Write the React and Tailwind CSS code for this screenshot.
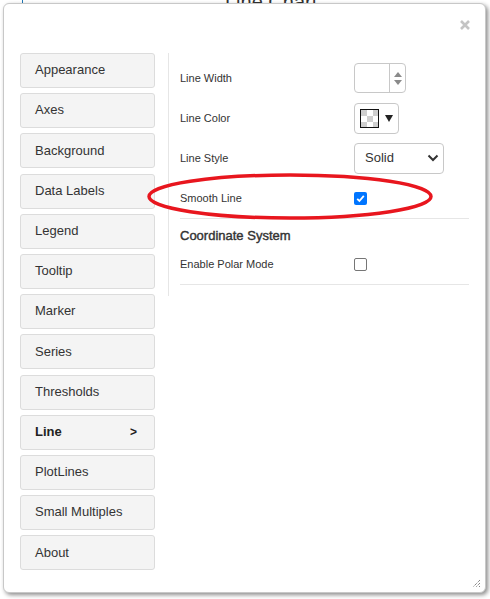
import React from "react";

const items = [
  "Appearance","Axes","Background","Data Labels","Legend","Tooltip","Marker","Series","Thresholds","Line","PlotLines","Small Multiples","About",
];

function Row({ label, children }) {
  return (
    <div className="flex h-[40px] items-center">
      <div className="w-[174px] text-[11px] text-[#333]">{label}</div>
      <div className="flex items-center">{children}</div>
    </div>
  );
}

function Checkbox({ checked }) {
  return checked ? (
    <div className="flex h-[13px] w-[13px] items-center justify-center rounded-[2px] bg-[#0075ff]">
      <svg width="11" height="11" viewBox="0 0 11 11">
        <path d="M2.2 5.8 L4.4 8 L8.8 2.8" fill="none" stroke="white" strokeWidth="1.8" />
      </svg>
    </div>
  ) : (
    <div className="h-[13px] w-[13px] rounded-[2px] border border-[#767676] bg-white" />
  );
}

export default function App() {
  return (
    <div
      className="relative h-[599px] w-[490px] overflow-hidden bg-white pl-[3px] pt-[3px]"
      style={{ fontFamily: '"Liberation Sans", Arial, sans-serif' }}
    >
      <div className="absolute left-[225px] top-[-13px] text-[20px] text-[#333]">Line Chart</div>
      <div className="absolute left-[22px] top-0 h-[4px] w-[1px] bg-[#1f77b4]" />
      <div className="relative flex h-[590px] w-[483px] flex-col rounded-[6px] border border-[#c8c8c8] bg-white shadow-[2px_2px_4px_rgba(0,0,0,0.45)]">
        <div className="flex h-[49px] justify-end pr-[14px] pt-[15px]">
          <svg width="12" height="12" viewBox="0 0 12 12">
            <path d="M2 2 L10 10 M10 2 L2 10" stroke="#c4c4c4" strokeWidth="2.6" />
          </svg>
        </div>
        <div className="flex items-start pl-[16px]">
          <div className="flex w-[135px] flex-col gap-[5.2px]">
            {items.map((it) => (
              <div
                key={it}
                className={
                  "flex h-[35px] items-center justify-between rounded-[3px] border border-[#dcdcdc] bg-[#f4f4f4] pb-[1px] pl-[14px] pr-[17px] text-[13px] " +
                  (it === "Line" ? "font-bold text-[#222]" : "text-[#333]")
                }
              >
                <span>{it}</span>
                {it === "Line" && <span className="text-[12px]">&gt;</span>}
              </div>
            ))}
          </div>
          <div className="ml-[13px] flex w-[304px] flex-col border-l border-[#e6e6e6] pb-[11px] pl-[11px] pt-[5px]">
            <Row label="Line Width">
              <div className="flex h-[30px] w-[52px] rounded-[4px] border border-[#c8c8c8] bg-white">
                <div className="flex-1" />
                <div className="flex w-[16px] flex-col items-center justify-center gap-[3px] border-l border-[#c8c8c8]">
                  <svg width="8" height="5" viewBox="0 0 8 5"><path d="M0 5 L4 0 L8 5Z" fill="#8a8a8a" /></svg>
                  <svg width="8" height="5" viewBox="0 0 8 5"><path d="M0 0 L4 5 L8 0Z" fill="#8a8a8a" /></svg>
                </div>
              </div>
            </Row>
            <Row label="Line Color">
              <div className="flex h-[31px] w-[45px] items-center rounded-[4px] border border-[#c8c8c8] bg-white pl-[5px]">
                <svg width="19" height="19" viewBox="0 0 19 19">
                  <rect x="0.5" y="0.5" width="18" height="18" fill="#fff" stroke="#111" />
                  <rect x="1" y="1" width="6" height="6" fill="#cfcfcf" />
                  <rect x="13" y="1" width="5" height="6" fill="#cfcfcf" />
                  <rect x="7" y="7" width="6" height="6" fill="#cfcfcf" />
                  <rect x="1" y="13" width="6" height="5" fill="#cfcfcf" />
                  <rect x="13" y="13" width="5" height="5" fill="#cfcfcf" />
                </svg>
                <svg className="ml-[6px]" width="8" height="7" viewBox="0 0 8 7"><path d="M0 0 L8 0 L4 7Z" fill="#222" /></svg>
              </div>
            </Row>
            <Row label="Line Style">
              <div className="flex h-[31px] w-[90px] items-center justify-between rounded-[4px] border border-[#c8c8c8] bg-white pl-[10px] pr-[4px] text-[13px] text-[#333]">
                <span>Solid</span>
                <svg width="12" height="8" viewBox="0 0 12 8"><path d="M1.5 1.5 L6 6 L10.5 1.5" fill="none" stroke="#333" strokeWidth="2" /></svg>
              </div>
            </Row>
            <Row label="Smooth Line">
              <Checkbox checked />
            </Row>
            <div className="mr-[3px] h-px bg-[#e6e6e6]" />
            <div className="pt-[9px] text-[13px] leading-[16px] text-[#333] [-webkit-text-stroke:0.4px_#333]">Coordinate System</div>
            <Row label="Enable Polar Mode">
              <Checkbox />
            </Row>
            <div className="mr-[3px] h-px bg-[#e6e6e6]" />
          </div>
        </div>
        <svg className="absolute bottom-[4px] right-[4px]" width="9" height="9" viewBox="0 0 9 9">
          <path d="M8 1 L1 8 M8 4 L4 8 M8 7 L7 8" stroke="#555" strokeWidth="1" strokeDasharray="1 1" />
        </svg>
      </div>
      <svg className="pointer-events-none absolute left-[146px] top-[172px]" width="290" height="50" viewBox="0 0 290 50">
        <ellipse cx="144" cy="24.5" rx="141" ry="21.5" fill="none" stroke="#e8161e" strokeWidth="3.5" />
      </svg>
    </div>
  );
}
